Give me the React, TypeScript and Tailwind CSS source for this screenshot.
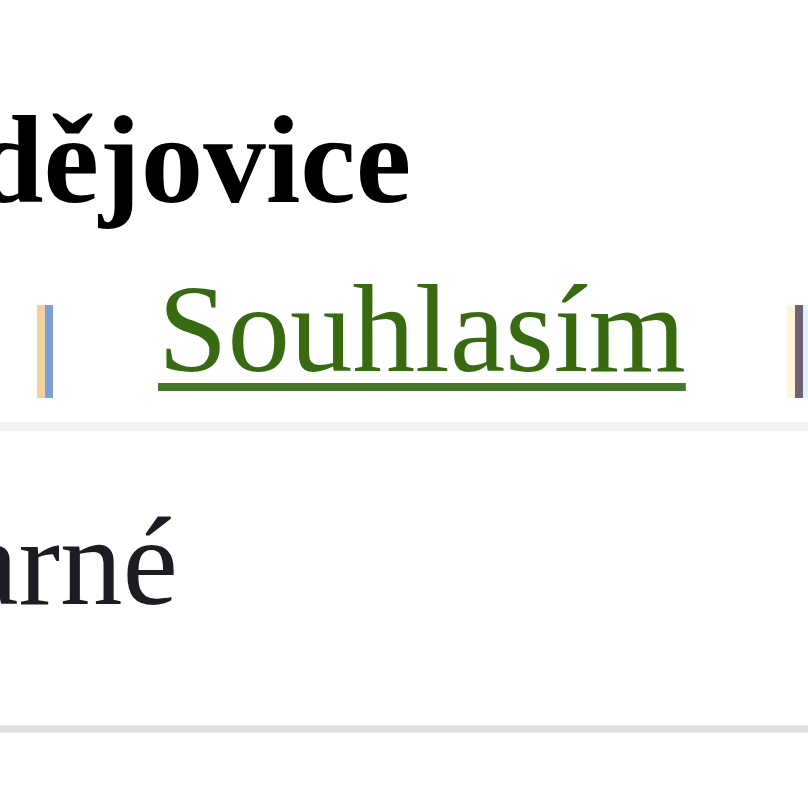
const serif = "font-['Liberation_Serif','Times_New_Roman',serif]";

export default function App() {
  return (
    <div className={`h-[808px] w-[808px] overflow-hidden bg-white ${serif}`}>
      {/* nadpis – město */}
      <div className="mt-[98px] ml-[-26px] whitespace-nowrap text-[125px] font-bold leading-none text-black">
        dějovice
      </div>

      {/* odkazy */}
      <div className="mt-[44px] flex items-start whitespace-nowrap text-[125px] leading-none">
        <span className="mt-[38px] ml-[37px] h-[93px] w-[16px] shrink-0 border-l-[8px] border-[#f0d2a2] bg-[#7ca0d2]" />
        <a
          href="#"
          className="ml-[105px] text-[#386a12] underline decoration-[#47772a] decoration-[8px] underline-offset-[12px]"
        >
          Souhlasím
        </a>
        <span className="mt-[38px] ml-[101px] h-[93px] w-[24px] shrink-0 border-x-[8px] border-l-[#fff4d8] border-r-[#dcf2ff] bg-[#706070]" />
      </div>

      <div className="mt-[24px] h-[9px] w-full bg-[#f2f2f2]" />

      {/* další řádek */}
      <div className="mt-[69px] ml-[-37px] whitespace-nowrap text-[125px] leading-none text-[#1c1c22]">
        arné
      </div>

      <div className="mt-[100px] h-[8px] w-full border-y border-[#ececec] bg-[#dedede]" />
    </div>
  );
}
